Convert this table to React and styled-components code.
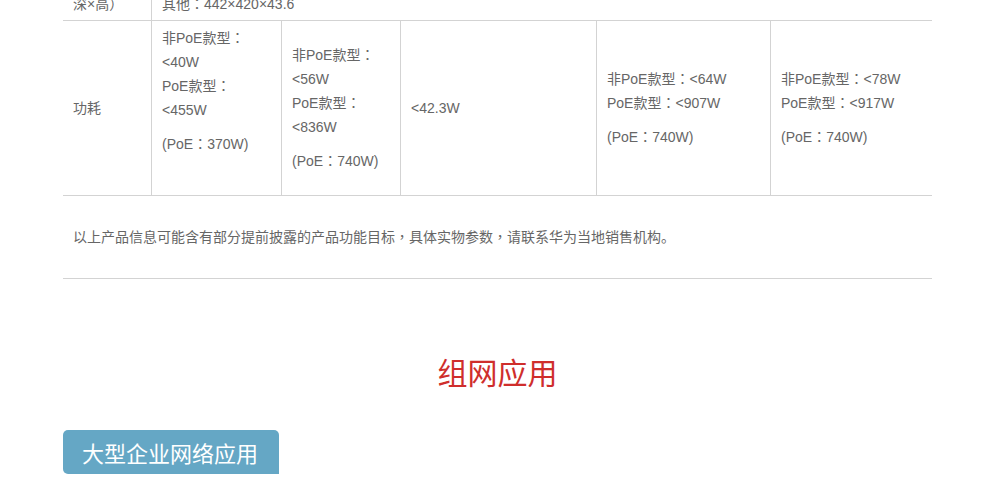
import React from "react";
import styled, { createGlobalStyle } from "styled-components";

const GlobalStyle = createGlobalStyle`
  html, body {
    margin: 0;
    padding: 0;
    background: #ffffff;
  }
  body {
    font-family: "Liberation Sans", Arial, "Noto Sans CJK SC", sans-serif;
    color: #666666;
    overflow: hidden;
  }
  * { box-sizing: border-box; }
`;

const Container = styled.div`
  width: 869px;
  margin-left: 63px;
  margin-top: -36px;
`;

const Row = styled.div`
  display: grid;
  grid-template-columns: 88px 130px 119px 196px 174px 162px;
  border-bottom: 1px solid #d3d3d3;
  min-height: ${(p) => p.$height || "auto"};
`;

const Cell = styled.div`
  grid-column: span ${(p) => p.$span || 1};
  display: flex;
  flex-direction: column;
  justify-content: center;
  padding: ${(p) => p.$pad || "5px"} 10px;
  border-left: ${(p) => (p.$first ? "none" : "1px solid #d3d3d3")};
  font-size: 14px;
  line-height: 24px;
  color: #666666;
`;

const Line = styled.p`
  margin: 0;
  white-space: nowrap;
  height: 24px;
`;

const PoeLine = styled.p`
  margin: 10px 0 0;
  white-space: nowrap;
  height: 24px;
`;

const Punct = styled.span`
  font-family: "Noto Sans CJK TC", sans-serif;
  line-height: 1;
`;

const Note = styled.div`
  padding: 29px 10px;
  border-bottom: 1px solid #d3d3d3;
  font-size: 14px;
  line-height: 24px;
  height: 83px;
  color: #666666;
`;

const Heading = styled.h2`
  margin: 70px 0 0;
  text-align: center;
  font-family: "Noto Sans CJK SC", sans-serif;
  font-weight: 400;
  font-size: 30px;
  line-height: 45px;
  color: #cf2e2c;
`;

const Tag = styled.div`
  display: inline-flex;
  align-items: center;
  height: 44px;
  margin-top: 36px;
  padding: 0 21px 0 19px;
  background: #65a7c5;
  color: #ffffff;
  font-family: "Noto Sans CJK SC", sans-serif;
  font-size: 22px;
  border-radius: 5px 5px 0 5px;
`;

function T({ children }) {
  const parts = String(children).split(/([：，])/);
  return parts.map((p, i) =>
    p === "：" || p === "，" ? <Punct key={i}>{p}</Punct> : <React.Fragment key={i}>{p}</React.Fragment>
  );
}

const powerCols = [
  {
    lines: ["非PoE款型：", "<40W", "PoE款型：", "<455W"],
    poe: "(PoE：370W)",
    spacer: true,
  },
  {
    lines: ["非PoE款型：", "<56W", "PoE款型：", "<836W"],
    poe: "(PoE：740W)",
  },
  { lines: ["<42.3W"] },
  {
    lines: ["非PoE款型：<64W", "PoE款型：<907W"],
    poe: "(PoE：740W)",
  },
  {
    lines: ["非PoE款型：<78W", "PoE款型：<917W"],
    poe: "(PoE：740W)",
  },
];

export default function App() {
  return (
    <>
      <GlobalStyle />
      <Container>
        <Row>
          <Cell $first $pad="4px">
            <Line>尺寸（宽×</Line>
            <Line>深×高）</Line>
          </Cell>
          <Cell $span={5} $pad="4px">
            <Line><T>PoE款型：442×420×43.6</T></Line>
            <Line><T>其他：442×420×43.6</T></Line>
          </Cell>
        </Row>
        <Row $height="175px">
          <Cell $first>
            <Line>功耗</Line>
          </Cell>
          {powerCols.map((c, i) => (
            <Cell key={i}>
              {c.lines.map((l, j) => (
                <Line key={j}><T>{l}</T></Line>
              ))}
              {c.poe && <PoeLine><T>{c.poe}</T></PoeLine>}
              {c.spacer && <PoeLine>{"\u00a0"}</PoeLine>}
            </Cell>
          ))}
        </Row>
        <Note>
          <T>以上产品信息可能含有部分提前披露的产品功能目标，具体实物参数，请联系华为当地销售机构。</T>
        </Note>
        <Heading>组网应用</Heading>
        <Tag>大型企业网络应用</Tag>
      </Container>
    </>
  );
}
